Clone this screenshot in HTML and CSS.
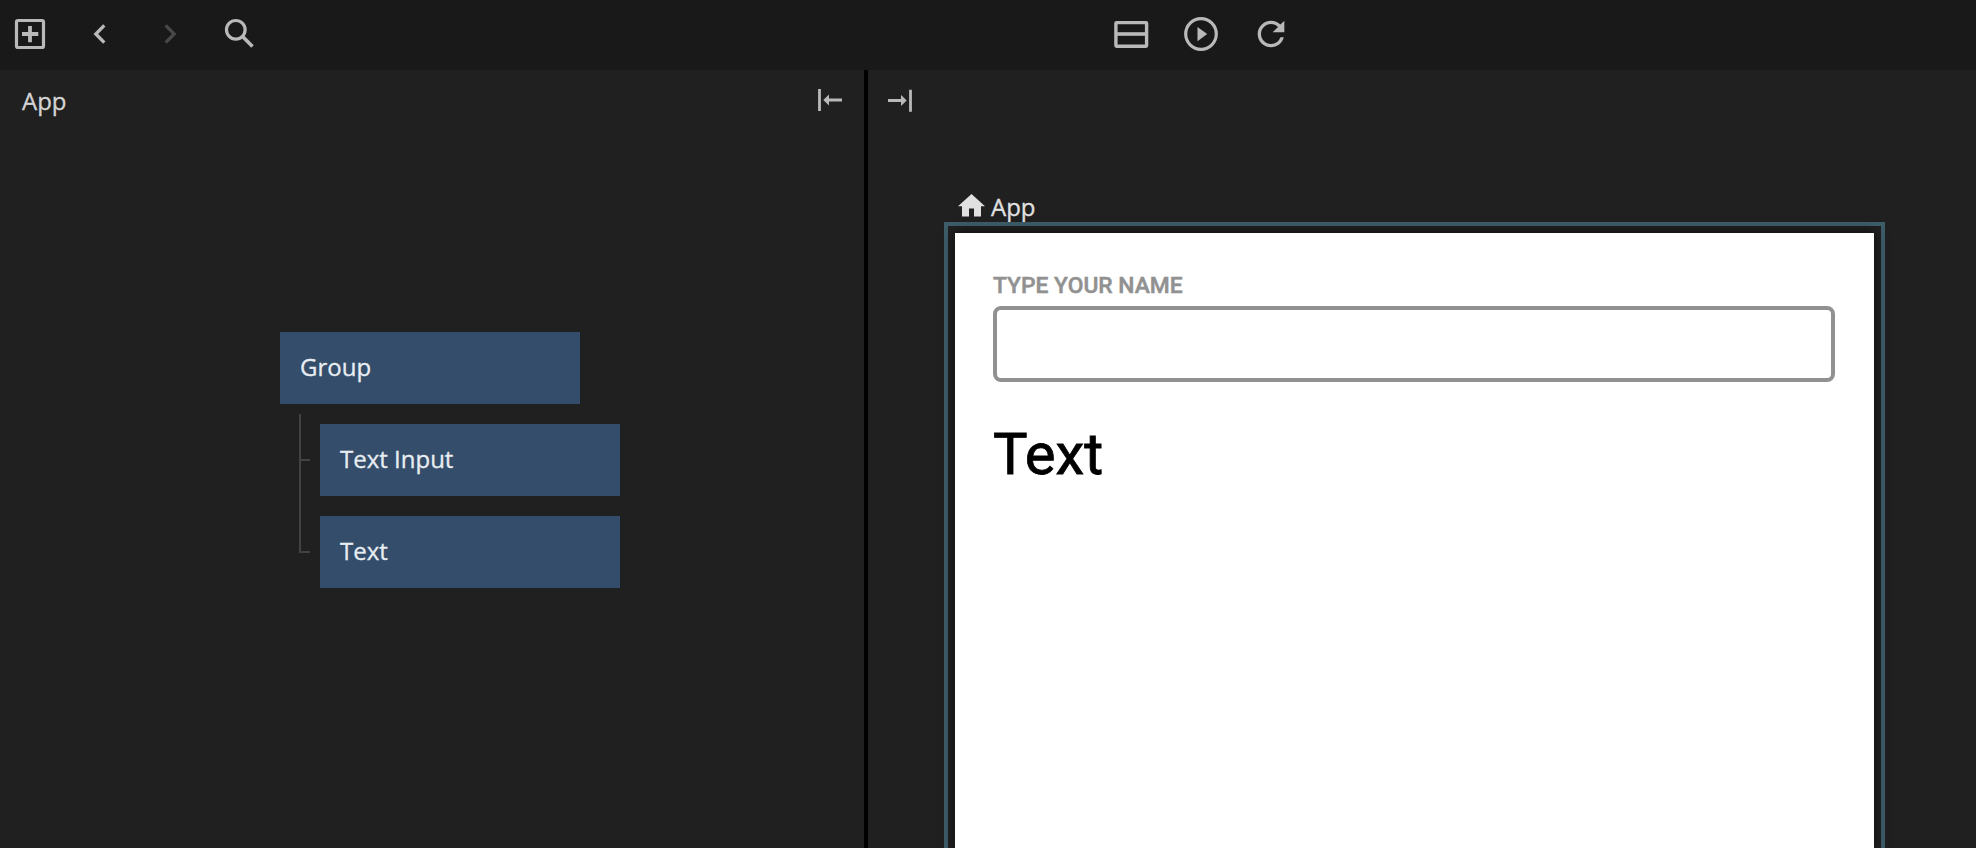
FILE: index.html
```html
<!DOCTYPE html>
<html lang="en">
<head>
<meta charset="utf-8">
<title>App</title>
<link rel="stylesheet" href="styles.css">
</head>
<body>
<header class="toolbar">
  <div class="tools tools-left">
    <svg class="icon" viewBox="0 0 40 40"><rect x="6.500" y="6.500" width="27" height="27" rx="1.500" fill="none" stroke="currentColor" stroke-width="3.200"/><path d="M20 12v16.300M12 20h16.300" stroke="currentColor" stroke-width="3.800"/></svg>
    <svg class="icon" viewBox="0 0 40 40"><path d="M24.300 11.300 15.800 20l8.500 8.700" fill="none" stroke="currentColor" stroke-width="3.300"/></svg>
    <svg class="icon icon-disabled" viewBox="0 0 40 40"><path d="M15.700 11.300 24.200 20l-8.500 8.700" fill="none" stroke="currentColor" stroke-width="3.300"/></svg>
    <svg class="icon" viewBox="0 0 40 40"><circle cx="15.800" cy="15.800" r="9.300" fill="none" stroke="currentColor" stroke-width="3.200"/><path d="M22.300 22.300 32.500 32.500" stroke="currentColor" stroke-width="3.600"/></svg>
  </div>
  <div class="tools tools-center">
    <svg class="icon" viewBox="0 0 40 40"><rect x="4.900" y="8.600" width="30.700" height="23.600" rx=".6" fill="none" stroke="currentColor" stroke-width="3.400"/><path d="M5 20h30" stroke="currentColor" stroke-width="3.600"/></svg>
    <svg class="icon" viewBox="0 0 40 40"><circle cx="20" cy="20" r="15.300" fill="none" stroke="currentColor" stroke-width="3.200"/><path d="M16.500 12.900v14.400l9.700-7.200z" fill="currentColor"/></svg>
    <svg class="icon" viewBox="0 0 24 24"><path d="M17.650 6.350A7.958 7.958 0 0 0 12 4c-4.420 0-7.990 3.580-7.990 8s3.570 8 7.990 8c3.730 0 6.840-2.550 7.730-6h-2.080A5.990 5.990 0 0 1 12 18c-3.310 0-6-2.690-6-6s2.690-6 6-6c1.660 0 3.140.69 4.220 1.780L13 11h7V4z" fill="currentColor"/></svg>
  </div>
</header>
<main class="workspace">
  <section class="panel graph">
    <div class="panel-head">
      <span class="title">App</span>
      <svg class="arrow" viewBox="0 0 28 28"><path d="M3.500 3v22M9 14h17" stroke="currentColor" stroke-width="2.800"/><path d="M13 8.600v10.800L7.300 14z" fill="currentColor"/></svg>
    </div>
    <div class="tree">
      <div class="node">Group</div>
      <div class="children">
        <svg class="branch" viewBox="0 0 12 140"><path d="M2 0v138h10M2 46h10" fill="none" stroke="currentColor" stroke-width="2"/></svg>
        <div class="node">Text Input</div>
        <div class="node">Text</div>
      </div>
    </div>
  </section>
  <section class="panel preview">
    <svg class="arrow" viewBox="0 0 28 28"><path d="M24.500 3.700v22M2 14.500h16" stroke="currentColor" stroke-width="2.800"/><path d="M15 9v10.900l5.700-5.400z" fill="currentColor"/></svg>
    <div class="frame-label">
      <svg class="home" viewBox="0 0 27 23"><path d="M13.500 0 27 12.200h-4V22.500h-7v-8h-5v8H4V12.200H0z" fill="currentColor"/></svg>
      <span>App</span>
    </div>
    <div class="frame">
      <div class="page">
        <label class="field-label" for="name">TYPE YOUR NAME</label>
        <input class="field" id="name" type="text">
        <div class="output">Text</div>
      </div>
    </div>
  </section>
</main>
</body>
</html>
```

FILE: styles.css
```css
* { box-sizing: border-box; }
body {
  margin: 0;
  height: 848px;
  display: flex;
  flex-direction: column;
  overflow: hidden;
  background: #202020;
  color: #d4d4d4;
  font: 24px/32px "Open Sans", "Noto Sans", sans-serif;
  -webkit-text-stroke: 0.3px currentColor;
}
svg { display: block; flex: none; }
.toolbar {
  height: 70px;
  flex: none;
  display: flex;
  padding: 14px 10px;
  background: #191919;
  color: #b9b9b9;
}
.tools { display: flex; gap: 30px; }
.tools-left { width: 1101px; }
.icon { width: 40px; height: 40px; }
.icon-disabled { color: #484848; }
.workspace { flex: 1; display: flex; min-height: 0; }
.graph { width: 868px; flex: none; border-right: 4px solid #000; }
.panel-head {
  display: flex;
  justify-content: space-between;
  padding: 16px 20px 0 22px;
}
.title { margin: -1px 0 1px; }
.arrow { width: 28px; height: 28px; color: #b9b9b9; }
.tree { padding: 214px 0 0 280px; }
.node {
  width: 300px;
  height: 72px;
  padding: 19px 20px;
  background: #344d6b;
  color: #e8edf2;
}
.children {
  position: relative;
  display: flex;
  flex-direction: column;
  gap: 20px;
  padding: 20px 0 0 40px;
}
.branch {
  position: absolute;
  left: 18px;
  top: 10px;
  width: 12px;
  height: 140px;
  color: #424242;
}
.preview {
  flex: 1;
  display: flex;
  flex-direction: column;
  padding: 16px 0 0 18px;
}
.frame-label {
  flex: none;
  display: flex;
  gap: 6px;
  height: 32px;
  margin: 77px 0 0 72px;
  color: #e0e0e0;
}
.home { width: 27px; height: 23px; margin-top: 3px; }
.frame {
  flex: 1;
  display: flex;
  min-height: 0;
  width: 941px;
  margin: -1px 0 0 58px;
  padding: 7px 7px 0;
  border: 4px solid #3d5d69;
  border-bottom: 0;
}
.page {
  width: 919px;
  display: flex;
  flex-direction: column;
  padding: 38px 38px 0;
  background: #fff;
  box-shadow: 0 0 12px #0009;
  font-family: Roboto, sans-serif;
}
.field-label {
  color: #919191;
  font-size: 22.8px;
  font-weight: 500;
  line-height: 30px;
  -webkit-text-stroke-width: 0.5px;
}
.field {
  width: 842px;
  height: 76px;
  margin-top: 5px;
  border: 4px solid #919191;
  border-radius: 8px;
  background: #fff;
}
.output {
  margin-top: 38px;
  color: #000;
  font-size: 58px;
  line-height: 68px;
  -webkit-text-stroke-width: 0.8px;
}
```
